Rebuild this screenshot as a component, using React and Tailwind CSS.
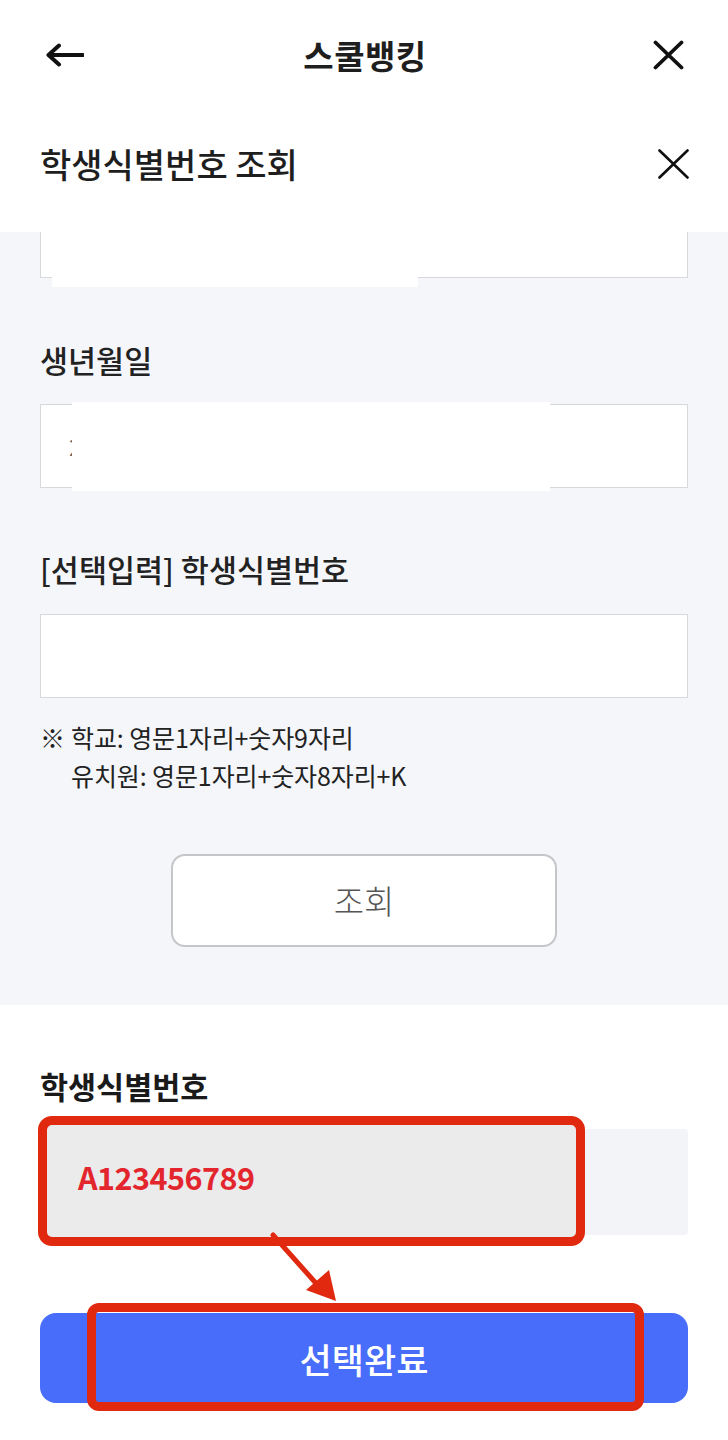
import React from "react";

export default function App() {
  return (
    <div
      className="relative w-[728px] h-[1440px] bg-white overflow-hidden text-[#1e1e1e]"
      style={{ fontFamily: '"Noto Sans CJK KR", "Noto Sans", sans-serif' }}
    >
      {/* App header */}
      <div className="flex items-center h-[110px] pl-[46px] pr-[44px]">
        <div className="w-[40px] flex items-center">
          <svg width="38" height="24" viewBox="0 0 38 24" fill="none">
            <path d="M2.5 12 H37 M13 2.5 L2.5 12 L13 21.5" stroke="#111" strokeWidth="4" strokeLinecap="round" strokeLinejoin="round" />
          </svg>
        </div>
        <div className="flex-1 text-center text-[33px] font-semibold leading-none tracking-[0.5px]">스쿨뱅킹</div>
        <div className="w-[40px] flex justify-end">
          <svg width="31" height="30" viewBox="0 0 31 30" fill="none">
            <path d="M2.5 2.5 L28.5 27.5 M28.5 2.5 L2.5 27.5" stroke="#111" strokeWidth="3.8" strokeLinecap="round" />
          </svg>
        </div>
      </div>

      {/* Modal title */}
      <div className="flex items-center justify-between h-[122px] pb-[14px] pl-[40px] pr-[39px]">
        <div className="text-[34px] font-medium leading-none">학생식별번호 조회</div>
        <svg width="31" height="30" viewBox="0 0 31 30" fill="none">
          <path d="M1.5 1.5 L29.5 28.5 M29.5 1.5 L1.5 28.5" stroke="#111" strokeWidth="2.6" strokeLinecap="round" />
        </svg>
      </div>

      {/* Gray form section */}
      <div className="bg-[#f4f6fa] px-[40px] pb-[58px] h-[773px]">
        <div className="relative h-[46px] bg-white border-x border-b border-[#d6d8dc]">
          <div className="absolute left-[11px] top-0 w-[366px] h-[55px] bg-white" />
        </div>

        <div className="mt-[62px] text-[30.5px] font-medium leading-[40px] text-[#222]">생년월일</div>
        <div className="relative mt-[24px] h-[84px] bg-white border border-[#d6d8dc] flex items-center pl-[28px] text-[24px] text-[#666]">
          2
          <div className="absolute left-[31px] top-[-3px] w-[478px] h-[89px] bg-white" />
        </div>

        <div className="mt-[61px] text-[30.5px] font-medium leading-[40px] text-[#222]">[선택입력] 학생식별번호</div>
        <div className="mt-[25px] h-[84px] bg-white border border-[#d6d8dc]" />

        <div className="mt-[20px] text-[25px] leading-[38px] text-[#222] tracking-[-0.1px]">
          <div className="flex">
            <span className="w-[31px]">※</span>
            <span>학교: 영문1자리+숫자9자리</span>
          </div>
          <div className="pl-[31px]">유치원: 영문1자리+숫자8자리+K</div>
        </div>

        <div className="flex justify-center mt-[60px]">
          <div className="w-[386px] h-[93px] rounded-[14px] border-2 border-[#c4c6ca] bg-white flex items-center justify-center text-[33px] font-light text-[#555]">
            조회
          </div>
        </div>
      </div>

      {/* White section */}
      <div className="px-[40px]">
        <div className="mt-[61px] text-[30.5px] font-bold leading-[40px] text-[#1a1a1a]">학생식별번호</div>
        <div className="relative mt-[23px] h-[106px] bg-[#f3f4f7] rounded-[4px]">
          <div className="absolute left-[-2px] top-[-13px] w-[547px] h-[130px] rounded-[14px] border-[9px] border-[#e0290f] bg-[#ebebeb] flex items-center pl-[31px] pb-[6px]">
            <span className="text-[30.5px] font-bold text-[#e3262e] tracking-[-0.5px]">A123456789</span>
          </div>
        </div>

        <div className="relative mt-[78px] h-[90px] rounded-[16px] bg-[#486dfb] flex items-center justify-center">
          <span className="text-[35px] font-medium text-white leading-none">선택완료</span>
          <div className="absolute left-[47px] top-[-10px] w-[557px] h-[108px] rounded-[12px] border-[9px] border-[#e0290f]" />
        </div>
      </div>

      {/* Annotation arrow */}
      <svg className="absolute left-[260px] top-[1228px]" width="90" height="80" viewBox="0 0 90 80" fill="none">
        <path d="M13 7 L62 62" stroke="#e0290f" strokeWidth="5" strokeLinecap="round" />
        <path d="M76 73 L46 62 L69 42 Z" fill="#e0290f" />
      </svg>
    </div>
  );
}
